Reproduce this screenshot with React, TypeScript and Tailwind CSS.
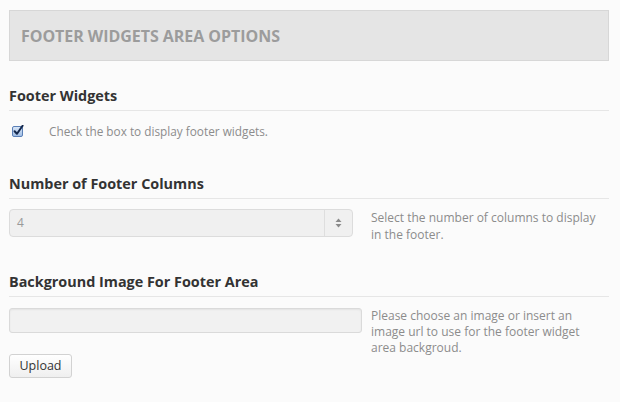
const font = { fontFamily: '"Open Sans", "Liberation Sans", sans-serif' };

function Heading({ children }: { children: React.ReactNode }) {
  return (
    <h3 className="border-b border-[#e6e6e6] pb-[4px] text-[14.4px] leading-[20px] font-bold text-[#333]">
      {children}
    </h3>
  );
}

function CheckedBox() {
  return (
    <svg width="12" height="12" viewBox="0 0 12 12" className="shrink-0">
      <defs>
        <linearGradient id="cb" x1="0" y1="0" x2="0" y2="1">
          <stop offset="0" stopColor="#dbe8f8" />
          <stop offset="1" stopColor="#9dbbe3" />
        </linearGradient>
      </defs>
      <rect x="0.5" y="1.5" width="10" height="10" rx="1.5" fill="url(#cb)" stroke="#5a7fb6" />
      <path d="M2.6 6.2 L5 8.8 L10.6 0.8" fill="none" stroke="#14284d" strokeWidth="2" strokeLinecap="round" strokeLinejoin="round" />
    </svg>
  );
}

// up/down triangles of the select
function UpDown() {
  return (
    <svg width="7" height="10" viewBox="0 0 7 10">
      <path d="M3.5 0.5 L6.5 4 L0.5 4 Z" fill="#8a8a8a" />
      <path d="M3.5 9.5 L6.5 6 L0.5 6 Z" fill="#8a8a8a" />
    </svg>
  );
}

export default function App() {
  return (
    <div className="min-h-screen bg-[#fbfbfb] px-[9px] pt-[10px]" style={font}>
      <div className="w-[600px]">
        {/* Panel title */}
        <div className="flex h-[51px] items-center border border-[#d7d7d7] bg-[#e5e5e5] pl-[11px]">
          <h2 className="text-[16px] font-bold tracking-[-0.05px] text-[#9c9c9c]">FOOTER WIDGETS AREA OPTIONS</h2>
        </div>

        {/* Footer widgets */}
        <div className="mt-[25px]">
          <Heading>Footer Widgets</Heading>
          <div className="mt-[13px] flex items-center pl-[3px]">
            <CheckedBox />
            <span className="ml-[25px] text-[11.8px] leading-[14px] text-[#8c8c8c]">Check the box to display footer widgets.</span>
          </div>
        </div>

        {/* Columns */}
        <div className="mt-[36px]">
          <Heading>Number of Footer Columns</Heading>
          <div className="mt-[10px] flex items-start">
            <div className="flex h-[28px] w-[344px] items-stretch rounded-[4px] border border-[#dcdcdc] bg-[#f0f0f0]">
              <div className="flex flex-1 items-center pl-[7px] text-[12px] text-[#999]">4</div>
              <div className="flex w-[28px] items-center justify-center border-l border-[#dedede]">
                <UpDown />
              </div>
            </div>
            <p className="ml-[18px] w-[228px] text-[12px] leading-[17px] text-[#8c8c8c]">
              Select the number of columns to display in the footer.
            </p>
          </div>
        </div>

        {/* Background image */}
        <div className="mt-[29px]">
          <Heading>Background Image For Footer Area</Heading>
          <div className="mt-[11px] flex items-start">
            <div className="w-[353px]">
              <div className="h-[25px] rounded-[3px] border border-[#dadada] bg-[#f1f1f1] shadow-[inset_0_1px_2px_rgba(0,0,0,0.06)]" />
              <button className="mt-[21px] h-[24px] w-[63px] rounded-[3px] border border-[#d2d2d2] bg-gradient-to-b from-white to-[#efefef] text-[12.5px] text-[#333]">
                Upload
              </button>
            </div>
            <p className="ml-[9px] w-[215px] text-[12px] leading-[16px] text-[#8c8c8c]">
              Please choose an image or insert an image url to use for the footer widget area backgroud.
            </p>
          </div>
        </div>
      </div>
    </div>
  );
}
